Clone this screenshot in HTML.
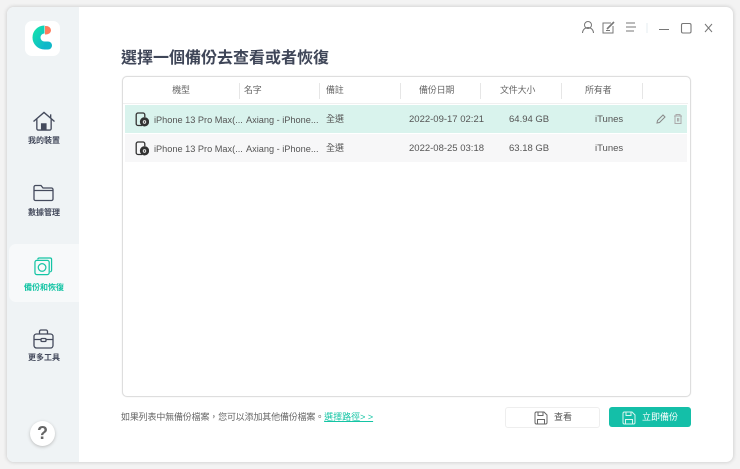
<!DOCTYPE html>
<html><head><meta charset="utf-8">
<style>
html,body{margin:0;padding:0}
body{width:740px;height:469px;background:#f3f3f3;position:relative;overflow:hidden;font-family:"Liberation Sans","Noto Sans CJK TC",sans-serif;color:#555}
.a{position:absolute;white-space:nowrap}
#win{left:7px;top:7px;width:726px;height:455px;background:#fff;border-radius:7px;box-shadow:0 0 3px 1px #d4d4d4}
#side{left:7px;top:7px;width:72px;height:455px;background:#eff3f5;border-radius:7px 0 0 7px}
.nav{font-size:8px;line-height:12px;font-weight:bold;color:#444a5c;width:72px;left:8px;text-align:center}
.th{font-size:9px;line-height:12px;letter-spacing:-.2px;color:#666;top:84px;text-align:center}
.sep{width:1px;height:16px;background:#e6e6e6;top:83px}
.td{font-size:9.5px;color:#555;line-height:12px}
.nm{font-size:9.2px}
</style></head><body>
<div class="a" id="win"></div>
<div class="a" id="side"></div>

<!-- logo -->
<div class="a" style="left:25px;top:21px;width:35px;height:35px;background:#fff;border-radius:7px"></div>
<svg class="a" style="left:25px;top:21px" width="35" height="35" viewBox="0 0 35 35">
<defs><linearGradient id="g" x1="0" y1="0" x2="1" y2="1"><stop offset="0" stop-color="#12dcb0"/><stop offset="1" stop-color="#0fb2cf"/></linearGradient></defs>
<path d="M19.500 8.500A8 8 0 0 0 19.500 24.500L23 24.500" fill="none" stroke="url(#g)" stroke-width="8"/>
<circle cx="23" cy="24.500" r="4" fill="#0fb8c8"/>
<path d="M20 5h1a5 4.250 0 0 1 0 8.500h-1z" fill="#ff7b5c"/>
</svg>

<!-- home -->
<svg class="a" style="left:32px;top:111px" width="24" height="21" viewBox="0 0 24 22" fill="none" stroke="#444a5c" stroke-width="1.400">
<path d="M1 11L12 1.500L23 11"/><path d="M4.500 8.500V18.500a1.500 1.500 0 0 0 1.500 1.500H18a1.500 1.500 0 0 0 1.500-1.500V8.500"/><path d="M9.500 20V13.500H14V20" fill="#444a5c"/><path d="M19 3.500V7.500"/>
</svg>
<div class="a nav" style="top:135px">我的裝置</div>

<!-- folder -->
<svg class="a" style="left:33px;top:184px" width="21" height="18" viewBox="0 0 21 18" fill="none" stroke="#444a5c" stroke-width="1.300">
<path d="M1 3a1.500 1.500 0 0 1 1.500-1.500H8L10 4H18.500A1.500 1.500 0 0 1 20 5.500V15a1.500 1.500 0 0 1-1.500 1.500H2.500A1.500 1.500 0 0 1 1 15Z"/><path d="M1 6.500H20"/>
</svg>
<div class="a nav" style="top:207px">數據管理</div>

<!-- active -->
<div class="a" style="left:9px;top:244px;width:70px;height:58px;background:#f7f9fa;border-radius:7px 0 0 7px"></div>
<svg class="a" style="left:34px;top:257px" width="19" height="19" viewBox="0 0 20 20" fill="none" stroke="#14c4a4" stroke-width="1.300">
<path d="M4 2.500A1.500 1.500 0 0 1 5.500 1H17a1.500 1.500 0 0 1 1.500 1.500V14a1.500 1.500 0 0 1-1.500 1.500"/>
<rect x="1" y="3.500" width="15" height="15" rx="2"/>
<circle cx="8.500" cy="11" r="4"/>
</svg>
<div class="a nav" style="top:282px;color:#14c4a4">備份和恢復</div>

<!-- toolbox -->
<svg class="a" style="left:33px;top:329px" width="21" height="20" viewBox="0 0 21 20" fill="none" stroke="#444a5c" stroke-width="1.300">
<rect x="1" y="5" width="19" height="14" rx="2.500"/><path d="M6.500 5V2.500A1.500 1.500 0 0 1 8 1H13a1.500 1.500 0 0 1 1.500 1.500V5"/><path d="M1 10.500H8M13 10.500H20"/><rect x="8" y="9.500" width="5" height="3" rx="1"/>
</svg>
<div class="a nav" style="top:352px">更多工具</div>

<!-- help -->
<div class="a" style="left:30px;top:421px;width:25px;height:25px;border-radius:50%;background:#fff;box-shadow:0 1px 3px #bbb;text-align:center;font-size:18px;font-weight:bold;line-height:25px;color:#666">?</div>

<!-- window controls -->
<svg class="a" style="left:580px;top:20px" width="140" height="16" viewBox="0 0 140 16" fill="none" stroke="#777" stroke-width="1">
<circle cx="8" cy="5" r="3.500"/><path d="M2.500 13a5.500 5.500 0 0 1 11 0"/>
<path d="M31 3H23v10H33V6"/><path d="M27 9L34 2" stroke-width="1.600"/><path d="M26 10.500H30"/>
<path d="M46 3H55M46 7H56M46 11H54"/>
<path d="M67 3V13" stroke="#e6edf2"/>
<path d="M79 9.500H89"/>
<rect x="101.500" y="3.500" width="9.500" height="9.500" rx="1.500" stroke-width="1.100"/>
<path d="M125 4L132 12M132 4L125 12"/>
</svg>

<!-- title -->
<div class="a" style="left:121px;top:48px;font-size:16px;line-height:22px;font-weight:bold;color:#3f4658">選擇一個備份去查看或者恢復</div>

<!-- table -->
<div class="a" style="left:122px;top:76px;width:567px;height:319px;border:1px solid #dedede;border-radius:5px;background:#fff;box-shadow:0 0 1px #ddd"></div>
<div class="a" style="left:123px;top:103px;width:565px;height:1px;background:#f0f0f0"></div>
<div class="a th" style="left:151px;width:60px">機型</div>
<div class="a sep" style="left:239px"></div>
<div class="a th" style="left:244px">名字</div>
<div class="a sep" style="left:319px"></div>
<div class="a th" style="left:326px">備註</div>
<div class="a sep" style="left:400px"></div>
<div class="a th" style="left:419px">備份日期</div>
<div class="a sep" style="left:480px"></div>
<div class="a th" style="left:500px">文件大小</div>
<div class="a sep" style="left:561px"></div>
<div class="a th" style="left:585px">所有者</div>
<div class="a sep" style="left:642px"></div>

<div class="a" style="left:125px;top:105px;width:562px;height:28px;background:#d9f3ed"></div>
<div class="a" style="left:125px;top:134px;width:562px;height:28px;background:#f7f7f8"></div>

<svg class="a" style="left:135px;top:112px" width="14" height="15" viewBox="0 0 14 15" fill="none" stroke="#333" stroke-width="1.300">
<path d="M7 13.500H3a1.800 1.800 0 0 1-1.800-1.800V2.800A1.800 1.800 0 0 1 3 1H8a1.800 1.800 0 0 1 1.800 1.800V5"/><circle cx="9.500" cy="9.800" r="4" fill="#333"/><circle cx="9.500" cy="10" r="1.300" stroke="#fff" stroke-width=".8"/>
</svg>
<svg class="a" style="left:135px;top:141px" width="14" height="15" viewBox="0 0 14 15" fill="none" stroke="#333" stroke-width="1.300">
<path d="M7 13.500H3a1.800 1.800 0 0 1-1.800-1.800V2.800A1.800 1.800 0 0 1 3 1H8a1.800 1.800 0 0 1 1.800 1.800V5"/><circle cx="9.500" cy="9.800" r="4" fill="#333"/><circle cx="9.500" cy="10" r="1.300" stroke="#fff" stroke-width=".8"/>
</svg>

<div class="a td nm" style="left:154px;top:114px">iPhone 13 Pro Max(...</div>
<div class="a td nm" style="left:246px;top:114px">Axiang - iPhone...</div>
<div class="a td" style="left:326px;top:113px;font-size:9px">全選</div>
<div class="a td" style="left:409px;top:114px">2022-09-17 02:21</div>
<div class="a td" style="left:509px;top:114px">64.94 GB</div>
<div class="a td" style="left:595px;top:114px">iTunes</div>

<div class="a td nm" style="left:154px;top:143px">iPhone 13 Pro Max(...</div>
<div class="a td nm" style="left:246px;top:143px">Axiang - iPhone...</div>
<div class="a td" style="left:326px;top:142px;font-size:9px">全選</div>
<div class="a td" style="left:409px;top:143px">2022-08-25 03:18</div>
<div class="a td" style="left:509px;top:143px">63.18 GB</div>
<div class="a td" style="left:595px;top:143px">iTunes</div>

<svg class="a" style="left:655px;top:113px" width="30" height="12" viewBox="0 0 30 12" fill="none" stroke="#888" stroke-width="1">
<path d="M2 10L2.500 7.500L8 2L10 4L4.500 9.500Z"/>
<path d="M19 3H27M21 3V1.500H25V3M20 3V10.500H26V3M22.500 5V8.500M23.700 5V8.500" stroke="#aaa"/>
</svg>

<!-- footer -->
<div class="a" style="left:121px;top:411px;font-size:9px;line-height:13px;letter-spacing:-.17px;color:#666">如果列表中無備份檔案，您可以添加其他備份檔案。<span style="color:#14c4a4;text-decoration:underline;letter-spacing:0">選擇路徑&gt; &gt;</span></div>

<div class="a" style="left:505px;top:407px;width:93px;height:19px;border:1px solid #eee;border-radius:3px;background:#fff"></div>
<svg class="a" style="left:534px;top:411px" width="14" height="14" viewBox="0 0 14 14" fill="none" stroke="#666" stroke-width="1">
<path d="M1 2.500A1.500 1.500 0 0 1 2.500 1H10L13 4V11.500A1.500 1.500 0 0 1 11.500 13H2.500A1.500 1.500 0 0 1 1 11.500Z"/><path d="M4 1V4.500H9V1M3.500 13V8.500H10.500V13"/>
</svg>
<div class="a" style="left:554px;top:411px;font-size:9px;line-height:13px;color:#555">查看</div>

<div class="a" style="left:609px;top:407px;width:82px;height:20px;background:#14bfa8;border-radius:3px"></div>
<svg class="a" style="left:622px;top:411px" width="14" height="14" viewBox="0 0 14 14" fill="none" stroke="#d8f5ef" stroke-width="1">
<path d="M1 2.500A1.500 1.500 0 0 1 2.500 1H10L13 4V11.500A1.500 1.500 0 0 1 11.500 13H2.500A1.500 1.500 0 0 1 1 11.500Z"/><path d="M4 1V4.500H9V1M3.500 13V8.500H10.500V13"/>
</svg>
<div class="a" style="left:642px;top:411px;font-size:9px;line-height:13px;color:#fff">立即備份</div>
</body></html>
